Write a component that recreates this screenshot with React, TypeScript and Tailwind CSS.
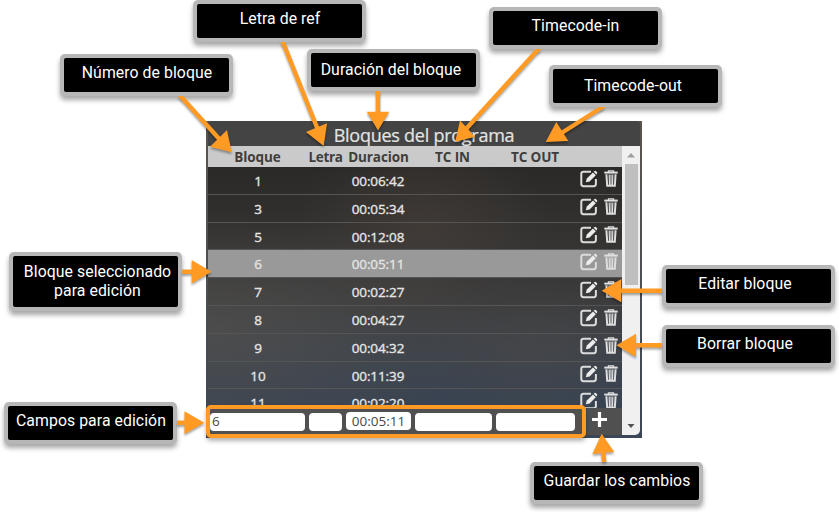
import React from "react";

type Label = { lines: string[]; box: string; text: string };

const labels: Label[] = [
  { lines: ["Letra de ref"], box: "left-[193px] top-0 h-[42px]", text: "pt-[5px] pl-[1px]" },
  { lines: ["Timecode-in"], box: "left-[489px] top-[7px] h-[42px]", text: "pt-[5px]" },
  { lines: ["Duración del bloque"], box: "left-[307px] top-[49px] h-[42px]", text: "pt-[7px] pr-[5px]" },
  { lines: ["Número de bloque"], box: "left-[60px] top-[54px] h-[42px]", text: "pt-[5px] pl-[1px]" },
  { lines: ["Timecode-out"], box: "left-[549px] top-[65px] h-[42px]", text: "pt-[7px] pr-[5px]" },
  { lines: ["Bloque seleccionado", "para edición"], box: "left-[9px] top-[252px] h-[59px]", text: "pt-[6px] pl-[4px]" },
  { lines: ["Editar bloque"], box: "left-[662px] top-[265px] h-[42px]", text: "pt-[5px] pr-[7px]" },
  { lines: ["Borrar bloque"], box: "left-[662px] top-[325px] h-[42px]", text: "pt-[5px] pr-[7px]" },
  { lines: ["Campos para edición"], box: "left-[4px] top-[402px] h-[42px]", text: "pt-[5px] pl-[1px]" },
  { lines: ["Guardar los cambios"], box: "left-[530px] top-[462px] h-[42px]", text: "pt-[5px] pl-[1px]" },
];

const rows = [
  ["1", "00:06:42"],
  ["3", "00:05:34"],
  ["5", "00:12:08"],
  ["6", "00:05:11"],
  ["7", "00:02:27"],
  ["8", "00:04:27"],
  ["9", "00:04:32"],
  ["10", "00:11:39"],
  ["11", "00:02:20"],
];

const cols = "grid grid-cols-[100px_35px_71px_79px_85px_44px]";

function EditIcon() {
  return (
    <svg width="18" height="18" viewBox="0 0 18 18" fill="none">
      <path d="M11 1.8H3.4Q1.3 1.8 1.3 3.9V14.1Q1.3 16.2 3.4 16.2H13.8Q15.9 16.2 15.9 14.1V9" stroke="#dcdcdc" strokeWidth="2" />
      <path d="M5.8 12.2L6.8 8.6L13 2.4L15.8 5.2L9.6 11.4Z" fill="#ececec" />
      <path d="M13.7 1.8L14.6 0.9Q15.2 0.4 15.8 1L17 2.2Q17.6 2.8 17 3.4L16.4 4.4Z" fill="#ececec" />
    </svg>
  );
}

function TrashIcon() {
  return (
    <svg width="14" height="17" viewBox="0 0 14 17" fill="none">
      <path d="M4.5 2V0.8H9.5V2" stroke="#dedede" strokeWidth="1.3" />
      <path d="M0.3 1.6H13.7V3.6H0.3Z" fill="#e2e2e2" />
      <path d="M2.4 4.3L3.2 15.8H10.8L11.6 4.3" stroke="#dedede" strokeWidth="2" />
      <path d="M5.2 4.6L5.5 15M7 4.6V15M8.8 4.6L8.5 15" stroke="#dedede" strokeWidth="1.2" />
    </svg>
  );
}

const arrows = [
  { line: "M179.5 95L222 142", head: "231.7,152.3 227,130 210,146.7" },
  { line: "M282.5 41L318 130", head: "323.7,146 327,123.3 306,132" },
  { line: "M378 90V115", head: "378,130.5 366.7,111.7 389.3,111.7" },
  { line: "M539.5 48L466 129", head: "455.2,141.8 460,120.5 475,136.8" },
  { line: "M604 106L560 134", head: "545.7,142 556.3,122 568.3,141" },
  { line: "M181 271.7H194", head: "211.5,271.7 191.7,260 191.7,283.4" },
  { line: "M176 422.7H188", head: "204.5,422.7 184.5,411.3 184.5,434" },
  { line: "M663 290.7H618", head: "601.7,290.7 621.3,279 621.3,302.2" },
  { line: "M663 345.3H632", head: "616.5,345.3 636,333.7 636,357" },
  { line: "M604.3 463L603 450", head: "601.7,433.7 592.3,454 614.3,452" },
];

function Panel() {
  return (
    <section className="relative h-[317px] w-[436px] bg-gradient-to-b from-[#5a544e] via-[#4c4f53] to-[#3b4656] font-['Open_Sans','Noto_Sans',sans-serif] text-[#e4e4e4]">
      <div className="ml-[2px] flex w-[432px] flex-col">
        <h1 className="h-[25px] overflow-hidden rounded-t-[4px] bg-[#444444] text-center text-[18px] leading-[28px] tracking-[-0.25px] [-webkit-text-stroke:0.2px_#e4e4e4]">
          Bloques del programa
        </h1>
        <div className="flex h-[289px]">
          <div className="flex w-[414px] flex-col">
            <div className={`${cols} h-[21px] shrink-0 bg-[#cacaca] text-center text-[13.5px] font-bold leading-[23px] tracking-[-0.1px] text-[#3e3e3e]`}>
              <span className="-ml-px">Bloque</span>
              <span className="whitespace-nowrap tracking-[-0.3px]">Letra</span>
              <span>Duracion</span>
              <span className="-ml-[2px]">TC IN</span>
              <span className="-ml-px">TC OUT</span>
            </div>
            <div className="h-[241px] overflow-hidden bg-[radial-gradient(ellipse_at_52%_24%,rgba(85,72,64,0.38),transparent_42%),radial-gradient(ellipse_at_78%_74%,rgba(80,75,73,0.45),transparent_28%),radial-gradient(ellipse_at_0%_68%,rgba(88,85,82,0.6),transparent_50%),linear-gradient(180deg,#2a2928_0%,#343332_30%,#3a3b3c_56%,#3b424b_77%,#384352_100%)]">
              {rows.map(([n, d]) => (
                <div
                  key={n}
                  className={`${cols} h-[27.8px] border-b border-[#555555] text-center text-[13.5px] leading-[28px] [-webkit-text-stroke:0.35px_#e4e4e4] ${n === "6" ? "bg-[#999999]" : ""}`}
                >
                  <span>{n}</span>
                  <span />
                  <span className="-ml-px tracking-[-0.1px]">{d}</span>
                  <span />
                  <span />
                  <span className="flex gap-[6px] pl-[1.5px] pt-[3px]">
                    <EditIcon />
                    <TrashIcon />
                  </span>
                </div>
              ))}
            </div>
            <div className="flex h-[27px] items-start bg-[#505050] pt-[5px] text-[13.5px] leading-[17px] text-[#484848]">
              <span className="ml-[2px] h-[18px] w-[95px] rounded-[4px] bg-white pl-[2px]">6</span>
              <span className="ml-[4px] h-[18px] w-[33px] rounded-[4px] bg-white" />
              <span className="-mt-px ml-[4px] h-[18px] w-[65px] rounded-[4px] bg-white text-center leading-[19px]">00:05:11</span>
              <span className="ml-[4px] h-[18px] w-[77px] rounded-[4px] bg-white" />
              <span className="ml-[4px] h-[18px] w-[79px] rounded-[4px] bg-white" />
              <svg className="-mt-px ml-[17px]" width="15" height="15" viewBox="0 0 15 15">
                <path d="M7.5 0V15M0 7.5H15" stroke="#ffffff" strokeWidth="3.2" />
              </svg>
            </div>
          </div>
          <div className="flex w-[18px] flex-col items-center rounded-br-[5px] bg-[#f0f0f0]">
            <svg width="18" height="18" viewBox="0 0 18 18">
              <path d="M5 11.5L9 7L13 11.5Z" fill="#a0a0a0" />
            </svg>
            <div className="h-[121px] w-[13px] bg-[#bfbfbf]" />
            <svg className="mt-auto" width="18" height="18" viewBox="0 0 18 18">
              <path d="M5.5 7L9 11L12.5 7Z" fill="#505050" />
            </svg>
          </div>
        </div>
      </div>
      <div className="absolute left-0 top-[284px] h-[33px] w-[380px] rounded-[5px] border-4 border-[#ff9b25] shadow-[0_3px_4px_rgba(0,0,0,0.3)]" />
    </section>
  );
}

export default function App() {
  return (
    <main className="relative h-[512px] w-[839px] overflow-hidden bg-white pl-[206px] pt-[121px]">
      <Panel />
      {labels.map((l) => (
        <div
          key={l.lines[0]}
          className={`absolute w-[173px] rounded-[5px] bg-[#b7b7b7] p-[4px] shadow-[0_4px_5px_rgba(0,0,0,0.35)] ${l.box}`}
        >
          <div className={`h-full whitespace-nowrap rounded-[2px] bg-black text-center font-['Roboto',sans-serif] text-[15.8px] leading-[19px] tracking-[0.07px] text-white ${l.text}`}>
            {l.lines.map((t) => (
              <div key={t}>{t}</div>
            ))}
          </div>
        </div>
      ))}
      <svg className="absolute left-0 top-0 drop-shadow-[0_2px_1px_rgba(0,0,0,0.35)]" width="839" height="512" viewBox="0 0 839 512">
        <defs>
          <clipPath id="outside">
            <path
              clipRule="evenodd"
              d="M0 0H839V512H0ZM193 0h173v42h-173ZM489 7h173v42h-173ZM307 49h173v42h-173ZM60 54h173v42h-173ZM549 65h173v42h-173ZM9 252h173v59h-173ZM662 265h173v42h-173ZM662 325h173v42h-173ZM4 402h173v42h-173ZM530 462h173v42h-173Z"
            />
          </clipPath>
        </defs>
        <g clipPath="url(#outside)">
          {arrows.map((a) => (
            <g key={a.head}>
              <path d={a.line} stroke="#ff9b25" strokeWidth="4.4" />
              <polygon points={a.head} fill="#ff9b25" />
            </g>
          ))}
        </g>
      </svg>
    </main>
  );
}
